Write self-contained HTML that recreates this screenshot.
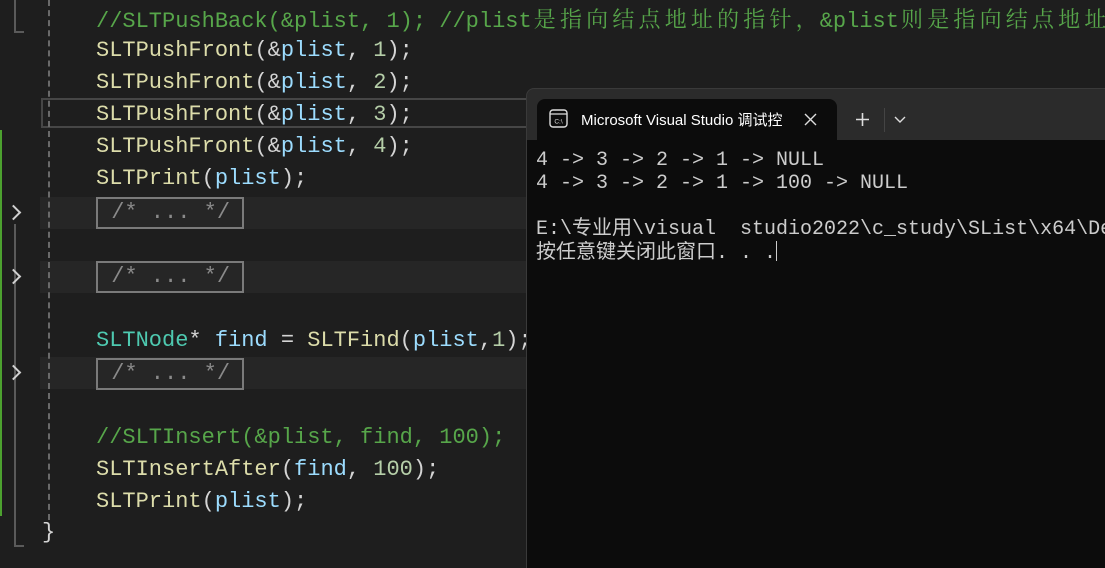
<!DOCTYPE html>
<html><head><meta charset="utf-8"><style>
html,body{margin:0;padding:0;width:1105px;height:568px;overflow:hidden;background:#1e1e1e;position:relative}
.c{position:absolute;left:96px;font-family:"Liberation Mono","Noto Sans CJK SC",monospace;font-size:22px;white-space:pre;color:#dcdcaa;line-height:32px;height:32px;}
.f{color:#dcdcaa}.v{color:#9cdcfe}.n{color:#b5cea8}.p{color:#d4d4d4}.cm{color:#57a64a}.t{color:#4ec9b0}
.k{display:inline-block;width:26.2px;text-align:center;font-family:"Noto Serif CJK SC","Noto Sans CJK SC",sans-serif;font-size:22px}
.box{position:absolute;left:96px;width:148px;height:32px;border:2px solid #7a7a7a;box-sizing:border-box;color:#8a8a8a;font-family:"Liberation Mono",monospace;font-size:22px;line-height:28px;white-space:pre;}
.reg{position:absolute;left:40px;width:486px;height:32px;background:#262626;}
.chev{position:absolute;left:8px;width:9px;height:9px;border-right:2px solid #d0d0d0;border-top:2px solid #d0d0d0;transform:rotate(45deg);}
.term{position:absolute;left:526px;top:88px;width:600px;height:480px;background:#2b2b2b;border-radius:8px 0 0 0;border-left:1px solid #3a3a3a;border-top:1px solid #3a3a3a;}
.tl{position:absolute;left:536px;font-family:"Liberation Mono","Noto Sans CJK SC",monospace;font-size:20px;color:#cccccc;white-space:pre;line-height:23px;}
</style></head><body>
<div class="reg" style="top:197px"></div>
<div class="reg" style="top:261px"></div>
<div class="reg" style="top:357px"></div>
<div style="position:absolute;left:41px;top:98px;width:490px;height:30px;border:2px solid #464646;box-sizing:border-box"></div>
<div style="position:absolute;left:14px;top:0;width:2px;height:32px;background:#5a5a5a"></div>
<div style="position:absolute;left:14px;top:31px;width:10px;height:2px;background:#5a5a5a"></div>
<div style="position:absolute;left:14px;top:224px;width:2px;height:323px;background:#5a5a5a"></div>
<div style="position:absolute;left:14px;top:545px;width:10px;height:2px;background:#5a5a5a"></div>
<div style="position:absolute;left:0;top:130px;width:2px;height:386px;background:#4ca12f"></div>
<div style="position:absolute;left:48px;top:0;width:0;height:520px;border-left:2px dashed #6a6a6a"></div>
<div class="chev" style="top:207px"></div>
<div class="chev" style="top:271px"></div>
<div class="chev" style="top:367px"></div>

<div class="c cm" style="top:3px">//SLTPushBack(&amp;plist, 1); //plist<span class="k">是</span><span class="k">指</span><span class="k">向</span><span class="k">结</span><span class="k">点</span><span class="k">地</span><span class="k">址</span><span class="k">的</span><span class="k">指</span><span class="k">针</span><span class="k">，</span>&amp;plist<span class="k">则</span><span class="k">是</span><span class="k">指</span><span class="k">向</span><span class="k">结</span><span class="k">点</span><span class="k">地</span><span class="k">址</span></div>
<div class="c" style="top:35px">SLTPushFront<span class="p">(&amp;</span><span class="v">plist</span><span class="p">, </span><span class="n">1</span><span class="p">);</span></div>
<div class="c" style="top:67px">SLTPushFront<span class="p">(&amp;</span><span class="v">plist</span><span class="p">, </span><span class="n">2</span><span class="p">);</span></div>
<div class="c" style="top:99px">SLTPushFront<span class="p">(&amp;</span><span class="v">plist</span><span class="p">, </span><span class="n">3</span><span class="p">);</span></div>
<div class="c" style="top:131px">SLTPushFront<span class="p">(&amp;</span><span class="v">plist</span><span class="p">, </span><span class="n">4</span><span class="p">);</span></div>
<div class="c" style="top:163px">SLTPrint<span class="p">(</span><span class="v">plist</span><span class="p">);</span></div>
<div class="box" style="top:197px"> /* ... */</div>
<div class="box" style="top:261px"> /* ... */</div>
<div class="c" style="top:325px"><span class="t">SLTNode</span><span class="p">* </span><span class="v">find</span><span class="p"> = </span>SLTFind<span class="p">(</span><span class="v">plist</span><span class="p">,</span><span class="n">1</span><span class="p">);</span></div>
<div class="box" style="top:358px"> /* ... */</div>
<div class="c cm" style="top:422px">//SLTInsert(&amp;plist, find, 100);</div>
<div class="c" style="top:454px">SLTInsertAfter<span class="p">(</span><span class="v">find</span><span class="p">, </span><span class="n">100</span><span class="p">);</span></div>
<div class="c" style="top:486px">SLTPrint<span class="p">(</span><span class="v">plist</span><span class="p">);</span></div>
<div class="c p" style="top:517px;left:42px">}</div>

<div class="term"></div>
<div style="position:absolute;left:527px;top:140px;width:578px;height:428px;background:#0c0c0c"></div>
<div style="position:absolute;left:537px;top:99px;width:300px;height:42px;background:#0c0c0c;border-radius:8px 8px 0 0"></div>
<svg style="position:absolute;left:549px;top:109px" width="19" height="19" viewBox="0 0 19 19"><rect x="1" y="1" width="17" height="17" rx="3" fill="none" stroke="#ddd" stroke-width="1.4"/><line x1="1" y1="5" x2="18" y2="5" stroke="#ddd" stroke-width="1.2"/><text x="9.5" y="14.5" font-size="6.5" fill="#ddd" text-anchor="middle" font-family="Liberation Sans">C:\</text></svg>
<div style="position:absolute;left:581px;top:109px;font-family:'Liberation Sans','Noto Sans CJK SC',sans-serif;font-size:15px;color:#fff;white-space:nowrap;width:206px;overflow:hidden">Microsoft Visual Studio 调试控</div>
<svg style="position:absolute;left:804px;top:113px" width="13" height="13"><path d="M1 1L12 12M12 1L1 12" stroke="#ddd" stroke-width="1.4"/></svg>
<svg style="position:absolute;left:855px;top:112px" width="15" height="15"><path d="M7.5 1V14M1 7.5H14" stroke="#ddd" stroke-width="1.6"/></svg>
<div style="position:absolute;left:884px;top:108px;width:1px;height:24px;background:#444"></div>
<svg style="position:absolute;left:894px;top:116px" width="12" height="8"><path d="M1 1L6 6L11 1" stroke="#ddd" stroke-width="1.4" fill="none"/></svg>
<div class="tl" style="top:149px">4 -&gt; 3 -&gt; 2 -&gt; 1 -&gt; NULL</div>
<div class="tl" style="top:172px">4 -&gt; 3 -&gt; 2 -&gt; 1 -&gt; 100 -&gt; NULL</div>
<div class="tl" style="top:218px">E:\专业用\visual  studio2022\c_study\SList\x64\Debug</div>
<div class="tl" style="top:241px">按任意键关闭此窗口. . .<span style="display:inline-block;width:1px;height:20px;background:#ccc;vertical-align:-3px"></span></div>
</body></html>
